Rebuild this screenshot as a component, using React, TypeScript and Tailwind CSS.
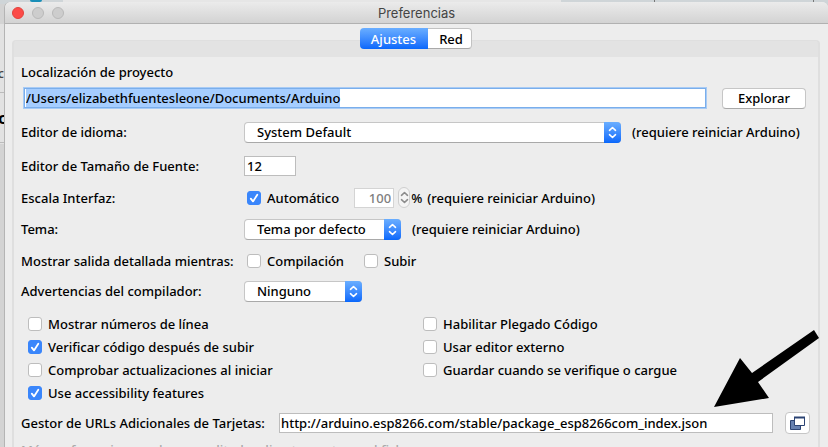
import { useEffect, useRef, type ReactNode } from "react";

const restartNote = "(requiere reiniciar Arduino)";

function UpDown() {
  return (
    <svg viewBox="0 0 17 21" className="h-[21px] w-[17px]" fill="none" stroke="currentColor" strokeWidth="1.6" strokeLinecap="round" strokeLinejoin="round">
      <path d="M5.500 8.300 8.500 5.500l3 2.800M5.500 12.700l3 2.800 3-2.800" />
    </svg>
  );
}

function Popup({ id, value, className }: { id: string; value: string; className: string }) {
  return (
    <div className={`relative h-[21px] ${className}`}>
      <select
        id={id}
        defaultValue={value}
        className="block h-full w-full appearance-none rounded border border-[#c6c6c6] border-b-[#a9a9a9] bg-white pl-3 leading-4 outline-none"
      >
        <option>{value}</option>
      </select>
      <span className="pointer-events-none absolute inset-y-0 right-0 w-[17px] rounded-r bg-linear-to-b from-[#6aaeff] to-[#0767fb] text-white">
        <UpDown />
      </span>
    </div>
  );
}

function Check({ label, checked = false }: { label: string; checked?: boolean }) {
  return (
    <label className="flex h-[23px] items-center gap-1.5 whitespace-nowrap">
      <span className="relative block h-3.5 w-3.5">
        <input
          type="checkbox"
          defaultChecked={checked}
          className="peer block h-full w-full appearance-none rounded-[3px] border border-[#bdbdbd] bg-white checked:border-[#3a86fb] checked:bg-[#3a86fb]"
        />
        <svg viewBox="0 0 14 14" className="pointer-events-none absolute inset-0 hidden peer-checked:block" fill="none" stroke="white" strokeWidth="1.8" strokeLinecap="round" strokeLinejoin="round">
          <path d="M3.8 7.6 6 10.4 10.3 3.8" />
        </svg>
      </span>
      {label}
    </label>
  );
}

function Row({ label, htmlFor, className, children }: { label: string; htmlFor?: string; className: string; children: ReactNode }) {
  return (
    <div className={`flex items-center ${className}`}>
      <label htmlFor={htmlFor} className="w-[223px] shrink-0 whitespace-nowrap">
        {label}
      </label>
      {children}
    </div>
  );
}

export default function App() {
  const folder = useRef<HTMLInputElement>(null);
  useEffect(() => {
    folder.current?.focus();
    folder.current?.select();
  }, []);

  return (
    <div className="relative flex h-screen flex-col overflow-hidden bg-[#d3d3d3] pt-0.5 pl-1 font-['Noto_Sans','Open_Sans',sans-serif] text-[13px] leading-4 font-medium text-black">
      <div className="absolute inset-x-0 top-0 flex h-1 bg-[#cfd5d8]">
        <span className="ml-[30px] h-0.5 w-3 rounded-b-full bg-[#1a8fb8]" />
        <span className="ml-[21px] w-[498px] bg-[#e6e6e6]" />
        <span className="ml-[93px] w-px bg-[#777777]" />
        <span className="ml-[158px] w-px bg-[#777777]" />
      </div>
      <div className="absolute top-6 left-0 h-[120px] w-1 overflow-hidden bg-[#e2e2e2] text-[#444444]">
        <span className="mt-[42px] -ml-0.5 block border-b border-[#bbbbbb] pb-[10px] text-xs">c</span>
        <span className="mt-[17px] -ml-0.5 block border-b border-[#bbbbbb] pb-[16px] text-base leading-4 font-bold text-black">c</span>
      </div>

      <main className="relative flex flex-1 flex-col rounded-t-md border-l border-[#b4b4b4] bg-[#ededed]">
        <header className="relative flex h-[22px] shrink-0 items-center justify-center rounded-t-md border-b border-[#b1b1b1] bg-linear-to-b from-[#ebebeb] to-[#d3d3d3]">
          <div className="absolute left-[7px] flex gap-2">
            <button aria-label="Cerrar" className="h-3 w-3 rounded-full border border-[#e2433d] bg-[#fc4b48]" />
            <button aria-label="Minimizar" className="h-3 w-3 rounded-full border border-[#b9b9b9] bg-[#cdcdcd]" />
            <button aria-label="Ampliar" className="h-3 w-3 rounded-full border border-[#b9b9b9] bg-[#cdcdcd]" />
          </div>
          <h1 className="font-[Inter,sans-serif] text-[13px] font-normal text-[#444444]">Preferencias</h1>
        </header>

        <nav className="relative z-10 mt-1 flex h-[21px] shrink-0 justify-center pr-0.5">
          <button className="w-[68px] rounded-l bg-linear-to-b from-[#6aaeff] to-[#0767fb] text-white">Ajustes</button>
          <button className="w-11 rounded-r border border-l-0 border-[#c2c2c2] border-b-[#a9a9a9] bg-white pl-1">Red</button>
        </nav>

        <section className="-mt-[9px] mr-2 ml-[7px] flex flex-1 flex-col rounded-t border-x-2 border-t border-[#dfdfdf] bg-[#e3e3e3] pt-4">
          <div className="flex-1 bg-[#ededed] pt-[7px] pr-3 pl-[7px]">
            <label htmlFor="folder" className="block h-[19px]">
              Localización de proyecto
            </label>
            <div className="flex h-[30px] items-center gap-4 pl-[3px]">
              <input
                id="folder"
                ref={folder}
                defaultValue="/Users/elizabethfuentesleone/Documents/Arduino"
                className="h-5 min-w-0 flex-1 border border-[#7aaeeb] bg-white px-px ring-1 ring-[#a8cbf5] outline-none selection:bg-[#a5cdff] selection:text-black"
              />
              <button className="h-[21px] w-[84px] rounded border border-[#c6c6c6] border-b-[#a9a9a9] bg-white leading-4">Explorar</button>
            </div>

            <Row label="Editor de idioma:" htmlFor="language" className="h-[38px]">
              <Popup id="language" value="System Default" className="flex-1" />
              <span className="ml-[11px] w-[174px] whitespace-nowrap">{restartNote}</span>
            </Row>
            <Row label="Editor de Tamaño de Fuente:" htmlFor="size" className="h-[30px]">
              <input id="size" defaultValue="12" className="h-5 w-[52px] border border-[#bdbdbd] bg-white px-0.5 outline-none" />
            </Row>
            <Row label="Escala Interfaz:" className="h-[33px]">
              <div className="ml-[3px] flex items-center">
                <Check label="Automático" checked />
                <input aria-label="Escala" defaultValue="100" disabled className="ml-[15px] h-5 w-10 border border-[#d4d4d4] bg-white px-0.5 text-right text-[#808080]" />
                <button aria-label="Cambiar escala" disabled className="ml-1 flex h-[21px] w-3 items-center justify-center rounded-md border border-[#cfcfcf] bg-[#f4f4f4] text-[#8c8c8c]">
                  <span className="flex w-[17px] shrink-0 justify-center">
                    <UpDown />
                  </span>
                </button>
                <span className="ml-px">%</span>
                <span className="ml-[5px]">{restartNote}</span>
              </div>
            </Row>
            <Row label="Tema:" htmlFor="theme" className="h-[30px]">
              <Popup id="theme" value="Tema por defecto" className="w-[157px]" />
              <span className="ml-[11px]">{restartNote}</span>
            </Row>
            <Row label="Mostrar salida detallada mientras:" className="h-[34px]">
              <div className="ml-[3px] grid grid-cols-[117px_auto]">
                <Check label="Compilación" />
                <Check label="Subir" />
              </div>
            </Row>
            <Row label="Advertencias del compilador:" htmlFor="warnings" className="h-[26px]">
              <Popup id="warnings" value="Ninguno" className="w-[118px]" />
            </Row>

            <div className="mt-2 grid grid-cols-[395px_auto] pl-[7px]">
              <div>
                <Check label="Mostrar números de línea" />
                <Check label="Verificar código después de subir" checked />
                <Check label="Comprobar actualizaciones al iniciar" />
                <Check label="Use accessibility features" checked />
              </div>
              <div>
                <Check label="Habilitar Plegado Código" />
                <Check label="Usar editor externo" />
                <Check label="Guardar cuando se verifique o cargue" />
              </div>
            </div>

            <div className="-mr-1 flex h-[38px] items-center">
              <label htmlFor="urls" className="w-[258px] shrink-0 whitespace-nowrap">
                Gestor de URLs Adicionales de Tarjetas:
              </label>
              <input
                id="urls"
                defaultValue="http://arduino.esp8266.com/stable/package_esp8266com_index.json"
                className="h-5 min-w-0 flex-1 border border-[#bdbdbd] bg-white px-px outline-none"
              />
              <button aria-label="Abrir lista de URLs" className="ml-3 flex h-[22px] w-[25px] items-center justify-center rounded border border-[#c6c6c6] bg-white">
                <svg viewBox="0 0 17 15" className="h-[15px] w-[17px]" stroke="#2b4373">
                  <path d="M1.500 4.500h10v9h-10z" fill="#6580b0" />
                  <path d="M5.500 1.500h10v8h-10z" fill="white" />
                  <path d="M5 1.500h11" strokeWidth="2" />
                </svg>
              </button>
            </div>
            <p className="whitespace-nowrap text-[#aaaaaa]">Más preferencias pueden ser editadas directamente en el fichero</p>
          </div>
        </section>
      </main>

      <svg viewBox="0 0 106 78" className="pointer-events-none absolute top-[330px] right-2 z-20 h-[78px] w-[106px]" fill="black">
        <path d="M0 77 26 28l12 15L100 0l5 8L44 52l11 16Z" />
      </svg>
    </div>
  );
}
